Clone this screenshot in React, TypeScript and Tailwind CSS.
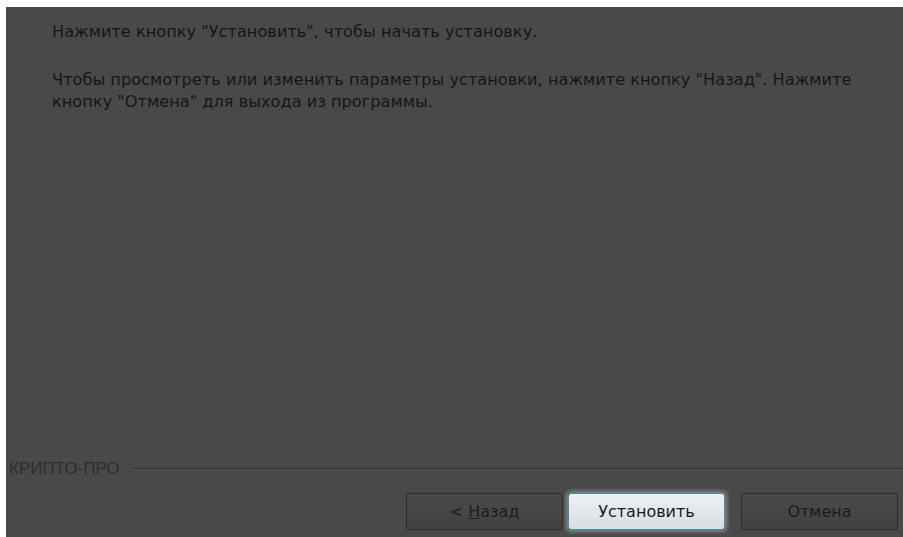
import React from 'react';

// Последняя страница мастера установки
const font = { fontFamily: '"DejaVu Sans", Tahoma, sans-serif' };

function WizardButton({
    children,
    primary,
}: {
    children: React.ReactNode;
    primary?: boolean;
}) {
    return (
        <button
            className={
                primary
                    ? 'w-[157px] h-[37px] rounded-[3px] border border-[#3a8fb5] bg-gradient-to-b from-[#eef1f3] to-[#d8dde1] text-[16px] text-[#1a1a1a] shadow-[0_0_4px_2px_rgba(255,255,255,0.35)]'
                    : 'w-[157px] h-[37px] rounded-[3px] border border-[#2c2c2c] bg-gradient-to-b from-[#4a4a4a] to-[#424242] text-[16px] text-[#1c1c1c]'
            }
            style={font}
        >
            {children}
        </button>
    );
}

export default function App() {
    return (
        <div className="w-[903px] h-[537px] bg-white pt-[7px] pl-[6px]" style={font}>
            <div className="w-full h-full bg-[#494949] flex flex-col">
                {/* текст страницы */}
                <div className="pl-[46px] pt-[14px] text-[16.2px] leading-[22px] text-[#161616] flex-1">
                    <p>Нажмите кнопку "Установить", чтобы начать установку.</p>
                    <p className="mt-[26px] w-[820px]">
                        Чтобы просмотреть или изменить параметры установки, нажмите кнопку "Назад". Нажмите кнопку "Отмена" для выхода из программы.
                    </p>
                </div>

                {/* разделитель с подписью */}
                <div className="flex items-center gap-[12px] pl-[3px] h-[18px]">
                    <span
                        className="text-[17px] text-[#2e2e2e]"
                        style={{ fontFamily: '"Liberation Sans", Arial, sans-serif' }}
                    >
                        КРИПТО-ПРО
                    </span>
                    <div className="flex-1 h-[2px] border-t border-[#333] border-b border-b-[#525252]" />
                </div>

                {/* кнопки */}
                <div className="flex justify-end pr-[5px] pt-[15px] pb-[7px]">
                    <WizardButton>
                        &lt; <span className="underline">Н</span>азад
                    </WizardButton>
                    <div className="w-[5px]" />
                    <WizardButton primary>Установить</WizardButton>
                    <div className="w-[16px]" />
                    <WizardButton>Отмена</WizardButton>
                </div>
            </div>
        </div>
    );
}
